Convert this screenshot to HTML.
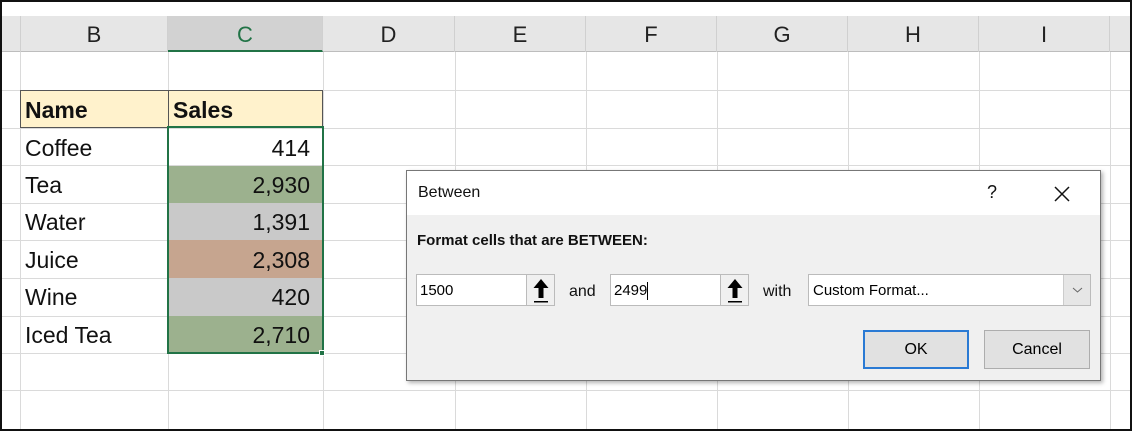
<!DOCTYPE html>
<html><head><meta charset="utf-8"><style>
*{margin:0;padding:0;box-sizing:border-box}
body{width:1132px;height:431px;overflow:hidden;background:#fff;font-family:"Liberation Sans",sans-serif;position:relative}
.a{position:absolute}
.hl{position:absolute;left:2px;right:2px;height:1px;background:#dadada}
.vl{position:absolute;top:52px;bottom:2px;width:1px;background:#dadada}
.ch{position:absolute;top:16px;height:36px;line-height:38px;text-align:center;font-size:22px;color:#222;border-right:1px solid #d0d0d0}
.c{position:absolute;font-size:23px;color:#111;line-height:39px;height:37px}
.num{text-align:right;padding-right:13px}
</style></head><body>
<div class="a" style="left:0;top:0;width:1132px;height:431px;border:2px solid #111"></div>
<div class="a" style="left:2px;top:16px;width:1128px;height:36px;background:#e6e6e6;border-bottom:1px solid #bdbdbd"></div>
<div class="ch" style="left:20px;width:148px;border-left:1px solid #d0d0d0">B</div>
<div class="ch" style="left:168px;width:155px;background:#d2d2d2;color:#217346;border-bottom:2px solid #217346">C</div>
<div class="ch" style="left:323px;width:132px">D</div>
<div class="ch" style="left:455px;width:131px">E</div>
<div class="ch" style="left:586px;width:131px">F</div>
<div class="ch" style="left:717px;width:131px">G</div>
<div class="ch" style="left:848px;width:131px">H</div>
<div class="ch" style="left:979px;width:131px">I</div>
<div class="hl" style="top:90px"></div><div class="hl" style="top:128px"></div><div class="hl" style="top:165px"></div><div class="hl" style="top:203px"></div><div class="hl" style="top:240px"></div><div class="hl" style="top:278px"></div><div class="hl" style="top:316px"></div><div class="hl" style="top:353px"></div><div class="hl" style="top:390px"></div>
<div class="vl" style="left:20px"></div><div class="vl" style="left:168px"></div><div class="vl" style="left:323px"></div><div class="vl" style="left:455px"></div><div class="vl" style="left:586px"></div><div class="vl" style="left:717px"></div><div class="vl" style="left:848px"></div><div class="vl" style="left:979px"></div><div class="vl" style="left:1110px"></div>
<div class="a" style="left:20px;top:90px;width:303px;height:38px;background:#fff2cc;border:1px solid #555"></div>
<div class="a" style="left:168px;top:90px;width:1px;height:38px;background:#555"></div>
<div class="c" style="left:25px;top:91px;font-weight:bold">Name</div>
<div class="c" style="left:173px;top:91px;font-weight:bold">Sales</div>
<div class="a" style="left:169px;top:166px;width:153px;height:37px;background:#9cb18e"></div>
<div class="a" style="left:169px;top:203px;width:153px;height:37px;background:#c9c9c9"></div>
<div class="a" style="left:169px;top:240px;width:153px;height:38px;background:#c6a58f"></div>
<div class="a" style="left:169px;top:278px;width:153px;height:38px;background:#c9c9c9"></div>
<div class="a" style="left:169px;top:316px;width:153px;height:37px;background:#9cb18e"></div>
<div class="c" style="left:25px;top:129px">Coffee</div><div class="c num" style="left:168px;width:155px;top:129px">414</div>
<div class="c" style="left:25px;top:166px">Tea</div><div class="c num" style="left:168px;width:155px;top:166px">2,930</div>
<div class="c" style="left:25px;top:203px">Water</div><div class="c num" style="left:168px;width:155px;top:203px">1,391</div>
<div class="c" style="left:25px;top:241px">Juice</div><div class="c num" style="left:168px;width:155px;top:241px">2,308</div>
<div class="c" style="left:25px;top:278px">Wine</div><div class="c num" style="left:168px;width:155px;top:278px">420</div>
<div class="c" style="left:25px;top:316px">Iced Tea</div><div class="c num" style="left:168px;width:155px;top:316px">2,710</div>
<div class="a" style="left:167px;top:126px;width:157px;height:228px;border:2px solid #217346"></div>
<div class="a" style="left:319px;top:350px;width:6px;height:6px;background:#217346;border:1px solid #fff"></div>
<div class="a" style="left:406px;top:170px;width:695px;height:211px;background:#f0f0f0;border:1px solid #777;box-shadow:2px 2px 4px rgba(0,0,0,.3)">
 <div class="a" style="left:0;top:0;width:693px;height:44px;background:#fff"></div>
 <div class="a" style="left:11px;top:13px;font-size:16px;color:#111">Between</div>
 <div class="a" style="left:580px;top:11px;font-size:18px;color:#111">?</div>
 <svg class="a" style="left:646px;top:14px" width="18" height="18"><path d="M2 2L16 16M16 2L2 16" stroke="#111" stroke-width="1.5"/></svg>
 <div class="a" style="left:10px;top:61px;font-size:15px;font-weight:bold;color:#111">Format cells that are BETWEEN:</div>
 <div class="a" style="left:9px;top:103px;width:139px;height:32px;background:#fff;border:1px solid #bbb;font-size:15px;line-height:31px;padding-left:3px">1500</div>
 <div class="a" style="left:119px;top:104px;width:28px;height:30px;background:#f0f0f0;border-left:1px solid #bbb"><svg width="28" height="30"><path d="M14 4L6.5 13H11.5V23H16.5V13H21.5Z" fill="#000"/><rect x="7" y="26" width="14" height="1.5" fill="#000"/></svg></div>
 <div class="a" style="left:162px;top:112px;font-size:16px;color:#111">and</div>
 <div class="a" style="left:203px;top:103px;width:139px;height:32px;background:#fff;border:1px solid #bbb;font-size:15px;line-height:31px;padding-left:3px">2499<span style="display:inline-block;width:1px;height:18px;background:#000;vertical-align:middle"></span></div>
 <div class="a" style="left:313px;top:104px;width:28px;height:30px;background:#f0f0f0;border-left:1px solid #bbb"><svg width="28" height="30"><path d="M14 4L6.5 13H11.5V23H16.5V13H21.5Z" fill="#000"/><rect x="7" y="26" width="14" height="1.5" fill="#000"/></svg></div>
 <div class="a" style="left:356px;top:112px;font-size:16px;color:#111">with</div>
 <div class="a" style="left:401px;top:103px;width:283px;height:32px;background:#fff;border:1px solid #bbb;font-size:15px;line-height:31px;padding-left:4px">Custom Format...</div>
 <div class="a" style="left:656px;top:104px;width:27px;height:30px;background:#e6e6e6;border-left:1px solid #ccc"><svg width="27" height="30"><path d="M9 13L13.5 17L18 13" stroke="#666" fill="none"/></svg></div>
 <div class="a" style="left:456px;top:159px;width:106px;height:39px;background:#e1e1e1;border:2px solid #2a7ad4;font-size:16px;line-height:36px;text-align:center">OK</div>
 <div class="a" style="left:577px;top:159px;width:106px;height:39px;background:#e1e1e1;border:1px solid #adadad;font-size:16px;line-height:38px;text-align:center">Cancel</div>
</div>
</body></html>
